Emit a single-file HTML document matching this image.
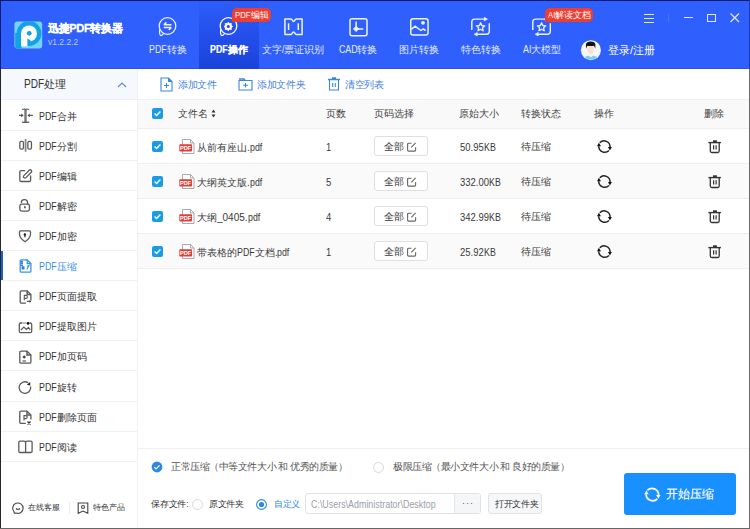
<!DOCTYPE html>
<html><head><meta charset="utf-8">
<style>
*{margin:0;padding:0;box-sizing:border-box}
html,body{width:750px;height:529px;overflow:hidden;background:#fff}
body{position:relative;font-family:"Liberation Sans",sans-serif;color:#333}
.a{position:absolute}
.L{display:inline-block;transform-origin:0 50%;white-space:pre}
.hdr{left:0;top:0;width:750px;height:69px;background:#2f60fd}
.seltab{left:199px;top:0;width:60px;height:69px;background:linear-gradient(#2e5efa 0%,#2550ec 45%,#1a43d9 100%)}
.tabt{top:44px;font-size:9.6px;color:#e6ecff;white-space:nowrap;line-height:11px;text-align:center;width:80px}
.badge{height:14px;background:#ee3e32;color:#fff;font-size:8.6px;line-height:14px;padding:0 1px 0 2px;border-radius:5px 5px 5px 1px;white-space:nowrap;text-align:center}
.side{left:1px;top:69px;width:137px;height:459px;background:#fff;border-right:1px solid #eef0f3}
.si{left:1px;width:136px;height:30px;border-bottom:1px solid #f0f1f3}
.st{position:absolute;left:38px;top:0;line-height:30px;font-size:9.6px;color:#333;white-space:nowrap}
.sic{position:absolute;left:13px;top:3.4px;width:24px;height:24px}
.tb{font-size:9.6px;color:#3f82e0;line-height:12px;white-space:nowrap;letter-spacing:-0.35px}
.th{font-size:9.6px;color:#444;line-height:12px;white-space:nowrap}
.row{left:138px;width:611px;height:35px;background:#fbfbfc;border-bottom:1px solid #eceef1}
.td{font-size:9.6px;color:#3a3a3a;line-height:12px;white-space:nowrap}
.btn{width:54px;height:20px;border:1px solid #e0e0e0;border-radius:3px;background:#fff}
</style></head><body>
<div class="a hdr"></div>
<div class="a" style="left:0;top:68px;width:750px;height:1px;background:#2a53e2"></div>
<div class="a seltab"></div>
<svg class="a" style="left:14px;top:21px" width="29" height="28" viewBox="0 0 29 28">
 <defs><clipPath id="lc"><rect x="0.4" y="0.4" width="27.8" height="27" rx="3"/></clipPath></defs>
 <g clip-path="url(#lc)">
 <rect width="29" height="28" fill="#72d4f7"/>
 <circle cx="15" cy="12.5" r="12.4" fill="#12a2e6"/>
 <rect x="1.2" y="12" width="6.5" height="16" fill="#12a2e6"/>
 <circle cx="15" cy="12.5" r="8" fill="#fff"/>
 <rect x="7.1" y="12.5" width="6.3" height="12.9" fill="#fff"/>
 <circle cx="15.2" cy="12.3" r="2.4" fill="#12a2e6"/>
 <path d="M13.4 17.6 L16.8 19.6 L15.6 21.5 L13.4 20.5Z" fill="#12a2e6"/>
 </g>
</svg>
<div class="a" style="left:48px;top:22px;font-size:11.2px;font-weight:900;color:#fff;line-height:13px;white-space:nowrap;letter-spacing:-0.4px;-webkit-text-stroke:0.3px #fff">迅捷PDF转换器</div>
<div class="a" style="left:48px;top:38px;font-size:8.5px;color:#b9c9fb;line-height:9px;white-space:nowrap">v1.2.2.2</div>
<svg class="a" style="left:157px;top:16px" width="22" height="22" viewBox="0 0 22 22" fill="none" stroke="#eef2ff" stroke-width="1.3"><circle cx="10.5" cy="10" r="8.3"/><path d="M2.75 13.3 C2.3 16.5 2.6 19.6 3.9 19.6 C5.1 19.6 5.7 18.5 6.6 17.3" stroke-width="1.2"/>
 <path d="M6.8 8.8h7.6M6.8 8.8l2.6-2.4M14.4 11.5H6.8M14.4 11.5l-2.6 2.4" stroke-width="1.5"/></svg>
<div class="a tabt" style="left:128px"><span class="L" style="font-size:10.5px;transform:scaleX(0.84);margin-right:-3.36px">PDF</span>转换</div>
<svg class="a" style="left:218px;top:16px" width="22" height="22" viewBox="0 0 22 22" fill="none" stroke="#fff" stroke-width="1.3"><circle cx="10.5" cy="10" r="8.3"/><path d="M2.75 13.3 C2.3 16.5 2.6 19.6 3.9 19.6 C5.1 19.6 5.7 18.5 6.6 17.3" stroke-width="1.2"/>
 <polygon points="10.30,6.20 11.45,7.73 13.34,7.46 13.07,9.35 14.60,10.50 13.07,11.65 13.34,13.54 11.45,13.27 10.30,14.80 9.15,13.27 7.26,13.54 7.53,11.65 6.00,10.50 7.53,9.35 7.26,7.46 9.15,7.73" fill="#fff" stroke="#fff" stroke-width="0.9" stroke-linejoin="round"/><circle cx="10.3" cy="10.5" r="1.5" fill="#1f4ae2" stroke="none"/></svg>
<div class="a tabt" style="left:189px;font-weight:bold;color:#fff;-webkit-text-stroke:0.2px #fff"><span class="L" style="font-size:10.5px;transform:scaleX(0.84);margin-right:-3.36px">PDF</span>操作</div>
<div class="a badge" style="left:232px;top:8px;width:39px"><span class="L" style="font-size:9.4px;transform:scaleX(0.82);margin-right:-3.38px">PDF</span>编辑</div>
<svg class="a" style="left:283px;top:17px" width="21" height="20" viewBox="0 0 21 20" fill="none" stroke="#eef2ff" stroke-width="1.5" stroke-linejoin="round">
 <path d="M1.9 1.9 H8 C9.2 1.9 9.4 4.4 10.6 4.4 C11.8 4.4 12 1.9 13.2 1.9 H19.1 V17.4 H13.2 C12 17.4 11.8 15 10.6 15 C9.4 15 9.2 17.4 8 17.4 H1.9 Z"/>
 <path d="M5.6 6.3v6.7M15.3 6.3v6.7"/></svg>
<div class="a tabt" style="left:253px">文字<span class="L" style="font-size:10.5px;transform:scaleX(0.84);margin-right:-0.47px">/</span>票证识别</div>
<svg class="a" style="left:345px;top:13px" width="26" height="26" viewBox="0 0 26 26" fill="none" stroke="#eef2ff" stroke-width="1.5">
 <rect x="5" y="5.8" width="17" height="17" rx="2"/>
 <path d="M11.1 8.6V15.9H18.3"/><path d="M11.1 13.2 L13.8 15.9 L11.1 18.6 L8.4 15.9Z" fill="#eef2ff" stroke-width="0.8"/></svg>
<div class="a tabt" style="left:318px"><span class="L" style="font-size:10.5px;transform:scaleX(0.84);margin-right:-3.55px">CAD</span>转换</div>
<svg class="a" style="left:405px;top:13px" width="26" height="26" viewBox="0 0 26 26" fill="none" stroke="#eef2ff" stroke-width="1.5">
 <rect x="5.75" y="5.75" width="17.3" height="16.3" rx="2.3"/>
 <path d="M6.3 16.4 L10 13.2 L15.9 17.5 L18.3 15.9 L20.6 17.7" stroke-linejoin="round"/><circle cx="18" cy="9.8" r="1.9" fill="#eef2ff" stroke="none"/></svg>
<div class="a tabt" style="left:379px">图片转换</div>
<svg class="a" style="left:466px;top:13px" width="30" height="28" viewBox="0 0 30 28" fill="none" stroke="#eef2ff" stroke-width="1.4">
 <path d="M5.8 16.9 V9 Q5.8 6.1 8.7 6.1 H19"/><path d="M18.3 4.3 L21.4 6.1 L18.3 7.9Z" fill="#eef2ff" stroke-width="0.6"/>
 <path d="M23.3 10.3 V18.3 Q23.3 21.2 20.4 21.2 H10.5"/><path d="M11.2 19.4 L8.1 21.2 L11.2 23Z" fill="#eef2ff" stroke-width="0.6"/>
 <polygon points="14.60,9.80 15.83,12.50 18.78,12.84 16.60,14.85 17.19,17.76 14.60,16.30 12.01,17.76 12.60,14.85 10.42,12.84 13.37,12.50" stroke-width="1.3" stroke-linejoin="round"/></svg>
<div class="a tabt" style="left:441px">特色转换</div>
<svg class="a" style="left:527px;top:13px" width="30" height="28" viewBox="0 0 30 28" fill="none" stroke="#eef2ff" stroke-width="1.4">
 <path d="M5.8 16.9 V9 Q5.8 6.1 8.7 6.1 H19"/><path d="M18.3 4.3 L21.4 6.1 L18.3 7.9Z" fill="#eef2ff" stroke-width="0.6"/>
 <path d="M23.3 10.3 V18.3 Q23.3 21.2 20.4 21.2 H10.5"/><path d="M11.2 19.4 L8.1 21.2 L11.2 23Z" fill="#eef2ff" stroke-width="0.6"/>
 <polygon points="14.60,9.80 15.83,12.50 18.78,12.84 16.60,14.85 17.19,17.76 14.60,16.30 12.01,17.76 12.60,14.85 10.42,12.84 13.37,12.50" stroke-width="1.3" stroke-linejoin="round"/></svg>
<div class="a tabt" style="left:502px"><span class="L" style="font-size:10.5px;transform:scaleX(0.84);margin-right:-1.59px">AI</span>大模型</div>
<div class="a badge" style="left:545px;top:8px;width:48px"><span class="L" style="font-size:9.4px;transform:scaleX(0.82);margin-right:-1.60px">AI</span>解读文档</div>
<svg class="a" style="left:578px;top:37px" width="26" height="26" viewBox="0 0 26 26">
 <circle cx="12.9" cy="13.15" r="10" fill="#f4f7fc"/>
 <clipPath id="av"><circle cx="12.9" cy="13.15" r="9.6"/></clipPath>
 <g clip-path="url(#av)">
 <path d="M4 24 Q5 18.5 12.9 18.5 Q20.8 18.5 21.8 24z" fill="#7fcdf2"/>
 <path d="M10.5 18.3 L12.9 20.3 L15.3 18.3z" fill="#fff"/>
 <ellipse cx="12.6" cy="12.3" rx="3.1" ry="5" fill="#fbdfd0"/>
 <path d="M8 11.8 L7.9 7.5 Q8.5 4.4 12.7 4.4 Q17 4.4 17.4 7.5 L17.3 11.8 Q16.6 9.6 15.9 8.8 Q12.7 9.4 9.5 8.8 Q8.7 9.6 8 11.8z" fill="#111"/>
 </g>
</svg>
<div class="a" style="left:608px;top:44px;font-size:11px;color:#fff;line-height:12px;white-space:nowrap">登录/注册</div>
<div class="a" style="left:644px;top:14px;width:10px;height:1.3px;background:#dfe6ff"></div>
<div class="a" style="left:644px;top:18px;width:10px;height:1.3px;background:#dfe6ff"></div>
<div class="a" style="left:644px;top:22px;width:10px;height:1.3px;background:#dfe6ff"></div>
<div class="a" style="left:668px;top:14px;width:1px;height:8px;background:#4b74f4"></div>
<div class="a" style="left:684px;top:17px;width:9px;height:1.3px;background:#dfe6ff"></div>
<div class="a" style="left:707px;top:14px;width:9px;height:8px;border:1.3px solid #dfe6ff"></div>
<svg class="a" style="left:730px;top:13px" width="10" height="10" viewBox="0 0 10 10" stroke="#dfe6ff" stroke-width="1.3"><path d="M0.5 0.5L9 9M9 0.5L0.5 9"/></svg>
<div class="a side"></div>
<div class="a" style="left:1px;top:71px;width:136px;height:29px;background:#f5f8fc;border-bottom:1px solid #eceff3"></div>
<div class="a" style="left:24px;top:78px;font-size:11px;color:#333;line-height:13px;white-space:nowrap"><span class="L" style="font-size:12px;transform:scaleX(0.84);margin-right:-3.84px">PDF</span>处理</div>
<svg class="a" style="left:117px;top:82px" width="10" height="6" viewBox="0 0 10 6" fill="none" stroke="#6a8cc6" stroke-width="1.2"><path d="M1 5l4-4 4 4"/></svg>
<div class="a si" style="top:100.6px"><svg class="sic" viewBox="0 0 24 24" fill="none" stroke="#5a5a5a" stroke-width="1.3"><path d="M10.2 9.2v12.4M13 9.2v12.4" stroke="none"/><rect x="10.3" y="5.5" width="2.4" height="12.5" fill="#777" stroke="none"/><path d="M8 5.5 Q11.5 4.3 11.5 6 Q11.5 4.3 15.2 5.5 M8 17.9 Q11.5 19.2 11.5 17.5 Q11.5 19.2 15.2 17.9" stroke-width="1.2"/><path d="M5 11.4h3.2M18.9 11.4h-3.2" stroke-width="1.2"/><path d="M9.6 11.4 L7.3 9.6 V13.2Z M13.5 11.4 L15.8 9.6 V13.2Z" fill="#444" stroke="none"/></svg><div class="st" style="color:#333"><span class="L" style="font-size:10.5px;transform:scaleX(0.84);margin-right:-3.36px">PDF</span>合并</div></div>
<div class="a si" style="top:130.7px"><svg class="sic" viewBox="0 0 24 24" fill="none" stroke="#5a5a5a" stroke-width="1.3"><rect x="5.85" y="7.45" width="3.6" height="7.6" rx="1.3"/><rect x="13.85" y="7.45" width="3.6" height="7.6" rx="1.3"/><path d="M11.6 5v12.7" stroke-width="1.8" stroke="#888"/></svg><div class="st" style="color:#333"><span class="L" style="font-size:10.5px;transform:scaleX(0.84);margin-right:-3.36px">PDF</span>分割</div></div>
<div class="a si" style="top:160.8px"><svg class="sic" viewBox="0 0 24 24" fill="none" stroke="#5a5a5a" stroke-width="1.3"><path d="M11.1 6.7H7.1a1.3 1.3 0 0 0-1.3 1.3v8.2a1.3 1.3 0 0 0 1.3 1.3h8.2a1.3 1.3 0 0 0 1.3-1.3v-4.6"/><rect x="8.3" y="8.5" width="10.5" height="2.9" rx="1.45" transform="rotate(-45 13.55 9.95)"/></svg><div class="st" style="color:#333"><span class="L" style="font-size:10.5px;transform:scaleX(0.84);margin-right:-3.36px">PDF</span>编辑</div></div>
<div class="a si" style="top:190.9px"><svg class="sic" viewBox="0 0 24 24" fill="none" stroke="#5a5a5a" stroke-width="1.3"><rect x="5.85" y="10.15" width="9.6" height="7" rx="1.8"/><path d="M7.4 9 A3.1 3.1 0 0 1 13.6 8.6 V10.2"/><path d="M10.9 12.3v2" stroke-width="1.8"/></svg><div class="st" style="color:#333"><span class="L" style="font-size:10.5px;transform:scaleX(0.84);margin-right:-3.36px">PDF</span>解密</div></div>
<div class="a si" style="top:221.0px"><svg class="sic" viewBox="0 0 24 24" fill="none" stroke="#5a5a5a" stroke-width="1.3"><path d="M6.6 6.8H15.4Q16.5 6.8 16.5 7.9V10.2Q16.5 14 11 17.8Q5.5 14 5.5 10.2V7.9Q5.5 6.8 6.6 6.8Z"/><circle cx="10.9" cy="10.5" r="1.2" fill="#222" stroke="none"/><path d="M10.9 11v2.2" stroke="#333" stroke-width="1.3"/></svg><div class="st" style="color:#333"><span class="L" style="font-size:10.5px;transform:scaleX(0.84);margin-right:-3.36px">PDF</span>加密</div></div>
<div class="a si" style="top:251.1px"><svg class="sic" viewBox="0 0 24 24" fill="none" stroke="#3a8ee6" stroke-width="1.3"><path d="M7.4 5.8H13.2L16.9 9.5V16.9a1.2 1.2 0 0 1-1.2 1.2H7.4a1.2 1.2 0 0 1-1.2-1.2V7a1.2 1.2 0 0 1 1.2-1.2Z" stroke="#3a92e8"/><path d="M6.5 7.5h2.5M9 9.3h-2.5M6.5 11.2h2.5M8.3 13h1.5v1.8h-1.5z" stroke="#2d7fd8" stroke-width="1.4"/><path d="M13 12.5 L15 11.5 L12.8 15.5" stroke="#3a92e8" stroke-width="1.1"/><path d="M13.2 5.8V9.5H16.9" stroke="#3a92e8"/></svg><div class="st" style="color:#3a8ee6"><span class="L" style="font-size:10.5px;transform:scaleX(0.84);margin-right:-3.36px">PDF</span>压缩</div></div>
<div class="a si" style="top:281.2px"><svg class="sic" viewBox="0 0 24 24" fill="none" stroke="#5a5a5a" stroke-width="1.3"><path d="M16.9 15.5V9.5L13.2 5.8H7.4a1.2 1.2 0 0 0-1.2 1.2V16.9a1.2 1.2 0 0 0 1.2 1.2H12"/><path d="M13.2 5.8V9.5H16.9" stroke-width="1.5"/><path d="M10.3 15.3V10.4h1.6a1.5 1.5 0 0 1 0 3H10.3" stroke-width="1.1"/><path d="M12.8 16.4h3.6" stroke-width="1.2"/><path d="M17.3 16.4 L15.5 15 V17.8Z" fill="#333" stroke="none"/></svg><div class="st" style="color:#333"><span class="L" style="font-size:10.5px;transform:scaleX(0.84);margin-right:-3.36px">PDF</span>页面提取</div></div>
<div class="a si" style="top:311.3px"><svg class="sic" viewBox="0 0 24 24" fill="none" stroke="#5a5a5a" stroke-width="1.3"><path d="M8.5 8H6.8a1.5 1.5 0 0 0-1.5 1.5v6.7a1.5 1.5 0 0 0 1.5 1.5h9.4a1.5 1.5 0 0 0 1.5-1.5V9.5a1.5 1.5 0 0 0-1.5-1.5h-0.5"/><path d="M9 8h3.5" stroke="#999"/><circle cx="14.1" cy="8.4" r="1.4" fill="#111" stroke="none"/><path d="M7 15 L9.8 12 L12.4 14.5 L14.5 12.4 L16.3 14.8" stroke-width="1.2"/></svg><div class="st" style="color:#333"><span class="L" style="font-size:10.5px;transform:scaleX(0.84);margin-right:-3.36px">PDF</span>提取图片</div></div>
<div class="a si" style="top:341.4px"><svg class="sic" viewBox="0 0 24 24" fill="none" stroke="#5a5a5a" stroke-width="1.3"><path d="M7 6.1H13L16.9 10V17a1.2 1.2 0 0 1-1.2 1.2H7a1.2 1.2 0 0 1-1.2-1.2V7.3A1.2 1.2 0 0 1 7 6.1Z"/><path d="M13 6.1V10H16.9" stroke-width="1.5"/><path d="M10.2 10.2 L12 12 L10.2 13.8 L8.4 12Z" fill="#444" stroke="none"/><path d="M8.4 16h3.6" stroke-width="1.2"/></svg><div class="st" style="color:#333"><span class="L" style="font-size:10.5px;transform:scaleX(0.84);margin-right:-3.36px">PDF</span>加页码</div></div>
<div class="a si" style="top:371.5px"><svg class="sic" viewBox="0 0 24 24" fill="none" stroke="#5a5a5a" stroke-width="1.3"><path d="M16.6 11.5 A5.8 5.8 0 1 1 14.2 7.8"/><path d="M16.2 7 L12.8 9.8 L16.3 10.6Z" fill="#222" stroke="none"/></svg><div class="st" style="color:#333"><span class="L" style="font-size:10.5px;transform:scaleX(0.84);margin-right:-3.36px">PDF</span>旋转</div></div>
<div class="a si" style="top:401.6px"><svg class="sic" viewBox="0 0 24 24" fill="none" stroke="#5a5a5a" stroke-width="1.3"><path d="M16.9 14.5V10L13 6.2H7a1.2 1.2 0 0 0-1.2 1.2V17.2a1.2 1.2 0 0 0 1.2 1.2H11.8"/><path d="M13 6.2V10H16.9" stroke-width="1.5"/><path d="M10 15.5V10.6h1.7a1.5 1.5 0 0 1 0 3H10" stroke-width="1.2"/><path d="M13.5 16.5l3 3M16.5 16.5l-3 3" stroke-width="1.3" stroke="#333"/></svg><div class="st" style="color:#333"><span class="L" style="font-size:10.5px;transform:scaleX(0.84);margin-right:-3.36px">PDF</span>删除页面</div></div>
<div class="a si" style="top:431.7px"><svg class="sic" viewBox="0 0 24 24" fill="none" stroke="#5a5a5a" stroke-width="1.3"><path d="M6.1 6.1H10a1.6 1.6 0 0 1 1.6 1.6V17.5H6.1a1.3 1.3 0 0 1-1.3-1.3V7.4a1.3 1.3 0 0 1 1.3-1.3ZM11.6 17.5V7.7a1.6 1.6 0 0 1 1.6-1.6h3.6a1.3 1.3 0 0 1 1.3 1.3v8.8a1.3 1.3 0 0 1-1.3 1.3H6" /></svg><div class="st" style="color:#333"><span class="L" style="font-size:10.5px;transform:scaleX(0.84);margin-right:-3.36px">PDF</span>阅读</div></div>
<div class="a" style="left:1px;top:251px;width:2px;height:29px;background:#1d5fc4"></div>
<svg class="a" style="left:12px;top:502px" width="12" height="12" viewBox="0 0 12 12" fill="none" stroke="#444" stroke-width="1.1"><path d="M2.2 9.8A5.2 5.2 0 1 1 4 11"/><path d="M2.2 9.8 Q1.5 11.5 4 11"/><path d="M4 6.5q2 2 4 0"/></svg>
<div class="a" style="left:28px;top:503px;font-size:8px;color:#333;line-height:10px;white-space:nowrap">在线客服</div>
<div class="a" style="left:69px;top:502px;width:1px;height:12px;background:#eceef1"></div>
<svg class="a" style="left:77px;top:502px" width="12" height="12" viewBox="0 0 12 12" fill="none" stroke="#444" stroke-width="1.1"><path d="M1.2 1h9.6v10.3L6 9 1.2 11.3z"/><circle cx="6" cy="5" r="1.5"/></svg>
<div class="a" style="left:93px;top:503px;font-size:8px;color:#333;line-height:10px;white-space:nowrap">特色产品</div>
<svg class="a" style="left:160px;top:77px" width="13" height="15" viewBox="0 0 13 15" fill="none" stroke="#3c86e0" stroke-width="1.1"><path d="M1 1h7.5l3.5 3.5V14H1z"/><path d="M8.5 1v3.5H12" fill="#3c86e0"/><path d="M4 8.5h5M6.5 6v5"/></svg>
<div class="a tb" style="left:178px;top:79px">添加文件</div>
<svg class="a" style="left:238px;top:78px" width="15" height="13" viewBox="0 0 15 13" fill="none" stroke="#3c86e0" stroke-width="1.1"><path d="M1 2.5h13V12H1z"/><path d="M1 1h5l1 1.5" stroke-width="1.6"/><path d="M5 7.3h5M7.5 5v4.6"/></svg>
<div class="a tb" style="left:257px;top:79px">添加文件夹</div>
<svg class="a" style="left:327px;top:77px" width="14" height="14" viewBox="0 0 14 14" fill="none" stroke="#3c86e0" stroke-width="1.1"><path d="M1 2.5h12M5 1h4" stroke-width="1.6"/><path d="M2.5 3v10h9V3"/><path d="M5.7 6v4M8.3 6v4"/></svg>
<div class="a tb" style="left:345px;top:79px">清空列表</div>
<div class="a" style="left:138px;top:99px;width:611px;height:30px;background:#f9f9fa;border-top:1px solid #eef0f2;border-bottom:1px solid #eceef0"></div>
<svg class="a" style="left:152px;top:108px" width="11" height="11" viewBox="0 0 11 11"><rect width="11" height="11" rx="2" fill="#189ce6"/><path d="M2.6 5.6l2 2 3.8-4" fill="none" stroke="#fff" stroke-width="1.4"/></svg>
<div class="a th" style="left:178px;top:108px">文件名</div>
<div class="a th" style="left:326px;top:108px">页数</div>
<div class="a th" style="left:374px;top:108px">页码选择</div>
<div class="a th" style="left:459px;top:108px">原始大小</div>
<div class="a th" style="left:521px;top:108px">转换状态</div>
<div class="a th" style="left:594px;top:108px">操作</div>
<div class="a th" style="left:704px;top:108px">删除</div>
<svg class="a" style="left:211px;top:109px" width="5" height="9" viewBox="0 0 5 9" fill="#333"><path d="M2.5 0.5L4.5 3.5H0.5zM2.5 8.5L4.5 5.5H0.5z"/></svg>
<div class="a row" style="top:129px;background:#fff"></div>
<svg class="a" style="left:152px;top:141px" width="11" height="11" viewBox="0 0 11 11"><rect width="11" height="11" rx="2" fill="#189ce6"/><path d="M2.6 5.6l2 2 3.8-4" fill="none" stroke="#fff" stroke-width="1.4"/></svg>
<svg class="a" style="left:179px;top:139px" width="16" height="15" viewBox="0 0 16 15"><path d="M3.5 0.5h8l3.5 3.5v10.5h-11.5z" fill="#fff" stroke="#9aa3ae" stroke-width="0.9"/><path d="M11.5 0.5v3.5h3.5" fill="none" stroke="#9aa3ae" stroke-width="0.9"/><rect x="0.3" y="5.3" width="12.8" height="7.3" rx="0.8" fill="#dc4038"/><text x="6.7" y="10.9" font-size="5.6" font-family="Liberation Sans" font-weight="bold" fill="#fff" text-anchor="middle">PDF</text></svg>
<div class="a td" style="left:197px;top:141px">从前有座山<span class="L" style="font-size:10.5px;transform:scaleX(0.95);margin-right:-0.15px">.</span><span class="L" style="font-size:10.5px;transform:scaleX(0.84);margin-right:-2.34px">pdf</span></div>
<div class="a td" style="left:326px;top:141px"><span class="L" style="font-size:10.5px;transform:scaleX(0.9);margin-right:-0.58px">1</span></div>
<div class="a btn" style="left:374px;top:136px"></div>
<div class="a td" style="left:384px;top:141px">全部</div>
<svg class="a" style="left:406px;top:141px" width="12" height="11" viewBox="0 0 12 11" fill="none" stroke="#666" stroke-width="1.1"><path d="M9.6 6.2v2.9a1 1 0 0 1-1 1H2.6a1 1 0 0 1-1-1V3.2a1 1 0 0 1 1-1h2.9"/><path d="M5.3 6.4L9.6 1.8"/></svg>
<div class="a td" style="left:460px;top:141px"><span class="L" style="font-size:10.5px;transform:scaleX(0.9);margin-right:-2.63px">50.95</span><span class="L" style="font-size:10.5px;transform:scaleX(0.84);margin-right:-2.24px">KB</span></div>
<div class="a td" style="left:521px;top:141px">待压缩</div>
<svg class="a" style="left:594px;top:136px" width="22" height="22" viewBox="0 0 22 22" fill="none" stroke="#222" stroke-width="1.5"><path d="M5.8 6.74 A6 6 0 0 1 16.1 10.9"/><path d="M15 14.46 A6 6 0 0 1 4.7 10.3"/><path d="M15.9 14.4 L13.9 11.1 L17.9 10.9Z" fill="#111" stroke="none"/><path d="M4.9 6.8 L7 10.2 L3 10.3Z" fill="#111" stroke="none"/></svg>
<svg class="a" style="left:704px;top:136px" width="22" height="22" viewBox="0 0 22 22" fill="none" stroke="#333" stroke-width="1.3"><path d="M4.4 6.6h12.5" stroke-width="1.4"/><path d="M9 5.2h3.9" stroke-width="1.8"/><path d="M6.3 7v8a1.5 1.5 0 0 0 1.5 1.5h5.9a1.5 1.5 0 0 0 1.5-1.5V7"/><path d="M9.6 9.3v4.2M12.1 9.3v4.2" stroke-width="1.2"/></svg>
<div class="a row" style="top:164px;background:#fafafb"></div>
<svg class="a" style="left:152px;top:176px" width="11" height="11" viewBox="0 0 11 11"><rect width="11" height="11" rx="2" fill="#189ce6"/><path d="M2.6 5.6l2 2 3.8-4" fill="none" stroke="#fff" stroke-width="1.4"/></svg>
<svg class="a" style="left:179px;top:174px" width="16" height="15" viewBox="0 0 16 15"><path d="M3.5 0.5h8l3.5 3.5v10.5h-11.5z" fill="#fff" stroke="#9aa3ae" stroke-width="0.9"/><path d="M11.5 0.5v3.5h3.5" fill="none" stroke="#9aa3ae" stroke-width="0.9"/><rect x="0.3" y="5.3" width="12.8" height="7.3" rx="0.8" fill="#dc4038"/><text x="6.7" y="10.9" font-size="5.6" font-family="Liberation Sans" font-weight="bold" fill="#fff" text-anchor="middle">PDF</text></svg>
<div class="a td" style="left:197px;top:176px">大纲英文版<span class="L" style="font-size:10.5px;transform:scaleX(0.95);margin-right:-0.15px">.</span><span class="L" style="font-size:10.5px;transform:scaleX(0.84);margin-right:-2.34px">pdf</span></div>
<div class="a td" style="left:326px;top:176px"><span class="L" style="font-size:10.5px;transform:scaleX(0.9);margin-right:-0.58px">5</span></div>
<div class="a btn" style="left:374px;top:171px"></div>
<div class="a td" style="left:384px;top:176px">全部</div>
<svg class="a" style="left:406px;top:176px" width="12" height="11" viewBox="0 0 12 11" fill="none" stroke="#666" stroke-width="1.1"><path d="M9.6 6.2v2.9a1 1 0 0 1-1 1H2.6a1 1 0 0 1-1-1V3.2a1 1 0 0 1 1-1h2.9"/><path d="M5.3 6.4L9.6 1.8"/></svg>
<div class="a td" style="left:460px;top:176px"><span class="L" style="font-size:10.5px;transform:scaleX(0.9);margin-right:-3.21px">332.00</span><span class="L" style="font-size:10.5px;transform:scaleX(0.84);margin-right:-2.24px">KB</span></div>
<div class="a td" style="left:521px;top:176px">待压缩</div>
<svg class="a" style="left:594px;top:171px" width="22" height="22" viewBox="0 0 22 22" fill="none" stroke="#222" stroke-width="1.5"><path d="M5.8 6.74 A6 6 0 0 1 16.1 10.9"/><path d="M15 14.46 A6 6 0 0 1 4.7 10.3"/><path d="M15.9 14.4 L13.9 11.1 L17.9 10.9Z" fill="#111" stroke="none"/><path d="M4.9 6.8 L7 10.2 L3 10.3Z" fill="#111" stroke="none"/></svg>
<svg class="a" style="left:704px;top:171px" width="22" height="22" viewBox="0 0 22 22" fill="none" stroke="#333" stroke-width="1.3"><path d="M4.4 6.6h12.5" stroke-width="1.4"/><path d="M9 5.2h3.9" stroke-width="1.8"/><path d="M6.3 7v8a1.5 1.5 0 0 0 1.5 1.5h5.9a1.5 1.5 0 0 0 1.5-1.5V7"/><path d="M9.6 9.3v4.2M12.1 9.3v4.2" stroke-width="1.2"/></svg>
<div class="a row" style="top:199px;background:#fff"></div>
<svg class="a" style="left:152px;top:211px" width="11" height="11" viewBox="0 0 11 11"><rect width="11" height="11" rx="2" fill="#189ce6"/><path d="M2.6 5.6l2 2 3.8-4" fill="none" stroke="#fff" stroke-width="1.4"/></svg>
<svg class="a" style="left:179px;top:209px" width="16" height="15" viewBox="0 0 16 15"><path d="M3.5 0.5h8l3.5 3.5v10.5h-11.5z" fill="#fff" stroke="#9aa3ae" stroke-width="0.9"/><path d="M11.5 0.5v3.5h3.5" fill="none" stroke="#9aa3ae" stroke-width="0.9"/><rect x="0.3" y="5.3" width="12.8" height="7.3" rx="0.8" fill="#dc4038"/><text x="6.7" y="10.9" font-size="5.6" font-family="Liberation Sans" font-weight="bold" fill="#fff" text-anchor="middle">PDF</text></svg>
<div class="a td" style="left:197px;top:211px">大纲<span class="L" style="font-size:10.5px;transform:scaleX(0.95);margin-right:-1.61px">_0405.</span><span class="L" style="font-size:10.5px;transform:scaleX(0.84);margin-right:-2.34px">pdf</span></div>
<div class="a td" style="left:326px;top:211px"><span class="L" style="font-size:10.5px;transform:scaleX(0.9);margin-right:-0.58px">4</span></div>
<div class="a btn" style="left:374px;top:206px"></div>
<div class="a td" style="left:384px;top:211px">全部</div>
<svg class="a" style="left:406px;top:211px" width="12" height="11" viewBox="0 0 12 11" fill="none" stroke="#666" stroke-width="1.1"><path d="M9.6 6.2v2.9a1 1 0 0 1-1 1H2.6a1 1 0 0 1-1-1V3.2a1 1 0 0 1 1-1h2.9"/><path d="M5.3 6.4L9.6 1.8"/></svg>
<div class="a td" style="left:460px;top:211px"><span class="L" style="font-size:10.5px;transform:scaleX(0.9);margin-right:-3.21px">342.99</span><span class="L" style="font-size:10.5px;transform:scaleX(0.84);margin-right:-2.24px">KB</span></div>
<div class="a td" style="left:521px;top:211px">待压缩</div>
<svg class="a" style="left:594px;top:206px" width="22" height="22" viewBox="0 0 22 22" fill="none" stroke="#222" stroke-width="1.5"><path d="M5.8 6.74 A6 6 0 0 1 16.1 10.9"/><path d="M15 14.46 A6 6 0 0 1 4.7 10.3"/><path d="M15.9 14.4 L13.9 11.1 L17.9 10.9Z" fill="#111" stroke="none"/><path d="M4.9 6.8 L7 10.2 L3 10.3Z" fill="#111" stroke="none"/></svg>
<svg class="a" style="left:704px;top:206px" width="22" height="22" viewBox="0 0 22 22" fill="none" stroke="#333" stroke-width="1.3"><path d="M4.4 6.6h12.5" stroke-width="1.4"/><path d="M9 5.2h3.9" stroke-width="1.8"/><path d="M6.3 7v8a1.5 1.5 0 0 0 1.5 1.5h5.9a1.5 1.5 0 0 0 1.5-1.5V7"/><path d="M9.6 9.3v4.2M12.1 9.3v4.2" stroke-width="1.2"/></svg>
<div class="a row" style="top:234px;background:#fafafb"></div>
<svg class="a" style="left:152px;top:246px" width="11" height="11" viewBox="0 0 11 11"><rect width="11" height="11" rx="2" fill="#189ce6"/><path d="M2.6 5.6l2 2 3.8-4" fill="none" stroke="#fff" stroke-width="1.4"/></svg>
<svg class="a" style="left:179px;top:244px" width="16" height="15" viewBox="0 0 16 15"><path d="M3.5 0.5h8l3.5 3.5v10.5h-11.5z" fill="#fff" stroke="#9aa3ae" stroke-width="0.9"/><path d="M11.5 0.5v3.5h3.5" fill="none" stroke="#9aa3ae" stroke-width="0.9"/><rect x="0.3" y="5.3" width="12.8" height="7.3" rx="0.8" fill="#dc4038"/><text x="6.7" y="10.9" font-size="5.6" font-family="Liberation Sans" font-weight="bold" fill="#fff" text-anchor="middle">PDF</text></svg>
<div class="a td" style="left:197px;top:246px">带表格的<span class="L" style="font-size:10.5px;transform:scaleX(0.84);margin-right:-3.36px">PDF</span>文档<span class="L" style="font-size:10.5px;transform:scaleX(0.95);margin-right:-0.15px">.</span><span class="L" style="font-size:10.5px;transform:scaleX(0.84);margin-right:-2.34px">pdf</span></div>
<div class="a td" style="left:326px;top:246px"><span class="L" style="font-size:10.5px;transform:scaleX(0.9);margin-right:-0.58px">1</span></div>
<div class="a btn" style="left:374px;top:241px"></div>
<div class="a td" style="left:384px;top:246px">全部</div>
<svg class="a" style="left:406px;top:246px" width="12" height="11" viewBox="0 0 12 11" fill="none" stroke="#666" stroke-width="1.1"><path d="M9.6 6.2v2.9a1 1 0 0 1-1 1H2.6a1 1 0 0 1-1-1V3.2a1 1 0 0 1 1-1h2.9"/><path d="M5.3 6.4L9.6 1.8"/></svg>
<div class="a td" style="left:460px;top:246px"><span class="L" style="font-size:10.5px;transform:scaleX(0.9);margin-right:-2.63px">25.92</span><span class="L" style="font-size:10.5px;transform:scaleX(0.84);margin-right:-2.24px">KB</span></div>
<div class="a td" style="left:521px;top:246px">待压缩</div>
<svg class="a" style="left:594px;top:241px" width="22" height="22" viewBox="0 0 22 22" fill="none" stroke="#222" stroke-width="1.5"><path d="M5.8 6.74 A6 6 0 0 1 16.1 10.9"/><path d="M15 14.46 A6 6 0 0 1 4.7 10.3"/><path d="M15.9 14.4 L13.9 11.1 L17.9 10.9Z" fill="#111" stroke="none"/><path d="M4.9 6.8 L7 10.2 L3 10.3Z" fill="#111" stroke="none"/></svg>
<svg class="a" style="left:704px;top:241px" width="22" height="22" viewBox="0 0 22 22" fill="none" stroke="#333" stroke-width="1.3"><path d="M4.4 6.6h12.5" stroke-width="1.4"/><path d="M9 5.2h3.9" stroke-width="1.8"/><path d="M6.3 7v8a1.5 1.5 0 0 0 1.5 1.5h5.9a1.5 1.5 0 0 0 1.5-1.5V7"/><path d="M9.6 9.3v4.2M12.1 9.3v4.2" stroke-width="1.2"/></svg>
<div class="a" style="left:138px;top:448px;width:611px;height:1px;background:#eef0f3"></div>
<svg class="a" style="left:150.5px;top:461.3px" width="12" height="12" viewBox="0 0 12 12"><circle cx="6" cy="6" r="5.4" fill="#2b88e3"/><path d="M3.3 6.1l1.8 1.8 3.5-3.5" fill="none" stroke="#fff" stroke-width="1.2"/></svg>
<div class="a td" style="left:171px;top:461px;color:#555;letter-spacing:-0.45px">正常压缩（中等文件大小 和 优秀的质量）</div>
<div class="a" style="left:373px;top:462px;width:11px;height:11px;border:1px solid #d6d9de;border-radius:50%"></div>
<div class="a td" style="left:393px;top:461px;color:#555;letter-spacing:-0.45px">极限压缩（最小文件大小 和 良好的质量）</div>
<div class="a td" style="left:151px;top:498px;font-size:8.5px;color:#333;letter-spacing:-0.2px">保存文件:</div>
<div class="a" style="left:192px;top:499px;width:11px;height:11px;border:1px solid #d6d9de;border-radius:50%"></div>
<div class="a td" style="left:209px;top:498px;font-size:8.5px;color:#333;letter-spacing:-0.4px">原文件夹</div>
<svg class="a" style="left:256px;top:499px" width="11" height="11" viewBox="0 0 11 11"><circle cx="5.5" cy="5.5" r="4.9" fill="#fff" stroke="#2b88e3" stroke-width="1.1"/><circle cx="5.5" cy="5.5" r="2.6" fill="#2b88e3"/></svg>
<div class="a td" style="left:274px;top:498px;font-size:8.5px;color:#2b88e3;letter-spacing:-0.4px">自定义</div>
<div class="a" style="left:305px;top:493px;width:176px;height:21px;border:1px solid #dfe2e6;border-radius:3px;background:#fff"></div>
<div class="a" style="left:454px;top:494px;width:26px;height:19px;background:#f5f6f8;border-left:1px solid #e3e6ea"></div>
<div class="a" style="left:462px;top:499px;font-size:9px;color:#555;line-height:9px;letter-spacing:1px">···</div>
<div class="a td" style="left:311px;top:499px;font-size:9px;color:#9aa0a8"><span class="L" style="font-size:10px;transform:scaleX(0.89);margin-right:-15.40px">C:\Users\Administrator\Desktop</span></div>
<div class="a" style="left:488px;top:493px;width:54px;height:21px;border:1px solid #dfe2e6;border-radius:3px;background:#f6f7f9"></div>
<div class="a td" style="left:495px;top:498px;font-size:8.5px;color:#333;letter-spacing:-0.3px">打开文件夹</div>
<div class="a" style="left:624px;top:473px;width:112px;height:42px;background:#1890ff;border-radius:3px"></div>
<svg class="a" style="left:641px;top:483px" width="24" height="24" viewBox="0 0 22 22" fill="none" stroke="#fff" stroke-width="1.6"><path d="M5.8 6.74 A6 6 0 0 1 16.1 10.9"/><path d="M15 14.46 A6 6 0 0 1 4.7 10.3"/><path d="M15.9 14.4 L13.9 11.1 L17.9 10.9Z" fill="#fff" stroke="none"/><path d="M4.9 6.8 L7 10.2 L3 10.3Z" fill="#fff" stroke="none"/></svg>
<div class="a" style="left:666px;top:487px;font-size:12.4px;color:#fff;line-height:14px;white-space:nowrap;-webkit-text-stroke:0.15px #fff">开始压缩</div>
<div class="a" style="left:0;top:0;width:750px;height:1px;background:#0b1a6b"></div>
<div class="a" style="left:0;top:0;width:1px;height:529px;background:#262626"></div>
<div class="a" style="left:0;top:0;width:1px;height:69px;background:#0c1d70"></div>
<div class="a" style="left:749px;top:0;width:1px;height:529px;background:#6a6a6a"></div>
<div class="a" style="left:749px;top:0;width:1px;height:69px;background:#1a3ab5"></div>
<div class="a" style="left:0;top:528px;width:750px;height:1px;background:#666"></div>
</body></html>
